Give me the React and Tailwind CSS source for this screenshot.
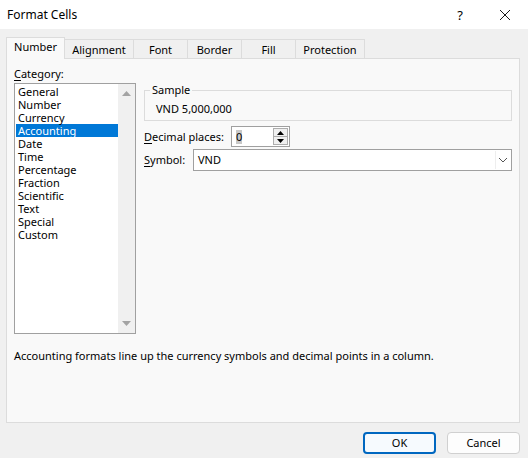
import React from "react";

const items = ["General","Number","Currency","Accounting","Date","Time","Percentage","Fraction","Scientific","Text","Special","Custom"];
const tabs = [
  { name: "Number", w: "w-[59px]" },
  { name: "Alignment", w: "w-[69px]" },
  { name: "Font", w: "w-[54px]" },
  { name: "Border", w: "w-[54px]" },
  { name: "Fill", w: "w-[54px]" },
  { name: "Protection", w: "w-[69px]" },
];

export default function App() {
  return (
    <div className="w-[528px] h-[458px] bg-[#f0f0f0] flex flex-col text-[11px] leading-[16px] text-black overflow-hidden" style={{ fontFamily: '"Noto Sans", "Open Sans", sans-serif' }}>
      {/* title bar */}
      <div className="h-[29px] bg-white flex items-center pl-[7px] shrink-0">
        <span className="text-[12px]">Format Cells</span>
        <span className="ml-auto w-[20px] text-center text-[13px] mr-[29px]">?</span>
        <svg width="12" height="12" viewBox="0 0 12 12" className="mr-[17px]">
          <path d="M1 1 L11 11 M11 1 L1 11" stroke="#1a1a1a" strokeWidth="1" />
        </svg>
      </div>

      {/* tabs */}
      <div className="mt-[8px] pl-[6px] flex items-end h-[21px] shrink-0">
        {tabs.map((t, i) =>
          i === 0 ? (
            <div key={t.name} className={`${t.w} h-[22px] -mb-px relative z-10 bg-[#f9f9f9] border border-b-0 border-[#dcdcdc] flex items-center justify-center pb-[3px]`}>
              {t.name}
            </div>
          ) : (
            <div key={t.name} className={`${t.w} h-[19px] bg-[#f0f0f0] border border-l-0 border-b-0 border-[#dcdcdc] flex items-center justify-center pt-[1px]`}>
              {t.name}
            </div>
          )
        )}
      </div>

      {/* panel */}
      <div className="ml-[6px] w-[514px] h-[365px] border border-[#dcdcdc] bg-[#f9f9f9] shrink-0 flex flex-col pt-[7px]">
        <div className="flex">
          {/* left column */}
          <div className="ml-[7px] flex flex-col">
            <div className="h-[16px]"><span className="underline underline-offset-2">C</span>ategory:</div>
            <div className="mt-[1px] w-[122px] h-[251px] border border-[#a0a0a0] bg-white flex">
              <div className="flex-1 pt-[1px] pl-[1px]">
                {items.map((it) => (
                  <div key={it} className={`h-[13px] leading-[13px] pl-[2px] ${it === "Accounting" ? "bg-[#0078d7] text-white" : ""}`}>
                    {it}
                  </div>
                ))}
              </div>
              <div className="w-[17px] bg-[#f0f0f0] flex flex-col items-center justify-between py-[7px]">
                <svg width="9" height="5" viewBox="0 0 9 5"><path d="M0 5 L4.5 0 L9 5 Z" fill="#a3a3a3" /></svg>
                <svg width="9" height="5" viewBox="0 0 9 5"><path d="M0 0 L4.5 5 L9 0 Z" fill="#a3a3a3" /></svg>
              </div>
            </div>
          </div>

          {/* right column */}
          <div className="ml-[8px] pt-[16px] flex flex-col w-[368px]">
            <fieldset className="border border-[#dcdcdc] pl-[11px] pt-[3px] pb-[3px]">
              <legend className="ml-[-6px] px-[2px]">Sample</legend>
              <div>VND 5,000,000</div>
            </fieldset>
            <div className="mt-[5px] flex items-center h-[21px]">
              <div className="w-[87px] shrink-0 whitespace-nowrap"><span className="underline underline-offset-2">D</span>ecimal places:</div>
              <div className="w-[59px] h-[21px] border border-[#a0a0a0] bg-white flex items-center">
                <span className="ml-[4px] bg-[#c8c8c8] leading-[14px]">0</span>
                <div className="ml-auto mr-[1px] w-[15px] h-[17px] border border-[#adadad] flex flex-col bg-[#f0f0f0]">
                  <div className="flex-1 flex items-center justify-center border-b border-[#adadad]">
                    <svg width="7" height="4" viewBox="0 0 7 4"><path d="M0 4 L3.5 0 L7 4 Z" fill="#000" /></svg>
                  </div>
                  <div className="flex-1 flex items-center justify-center">
                    <svg width="7" height="4" viewBox="0 0 7 4"><path d="M0 0 L3.5 4 L7 0 Z" fill="#000" /></svg>
                  </div>
                </div>
              </div>
            </div>
            <div className="mt-[2px] flex items-center h-[22px]">
              <div className="w-[49px] shrink-0 whitespace-nowrap"><span className="underline underline-offset-2">S</span>ymbol:</div>
              <div className="w-[319px] h-[22px] border border-[#a0a0a0] bg-white flex items-center">
                <span className="ml-[4px]">VND</span>
                <div className="ml-auto mr-[1px] w-[15px] h-[18px] flex items-center justify-center border-l border-[#eeeeee]">
                  <svg width="10" height="6" viewBox="0 0 10 6"><path d="M1 1 L5 5 L9 1" stroke="#555" strokeWidth="1" fill="none" /></svg>
                </div>
              </div>
            </div>
          </div>
        </div>

        <div className="ml-[7px] mt-[14px]">Accounting formats line up the currency symbols and decimal points in a column.</div>
      </div>

      {/* buttons */}
      <div className="mt-[9px] flex justify-end pr-[8px] gap-[11px]">
        <button className="w-[73px] h-[22px] rounded-[4px] border-2 border-[#0067c0] bg-[#f6fafe] flex items-center justify-center">OK</button>
        <button className="w-[73px] h-[22px] rounded-[4px] border border-[#d0d0d0] bg-[#fdfdfd] flex items-center justify-center">Cancel</button>
      </div>
    </div>
  );
}
